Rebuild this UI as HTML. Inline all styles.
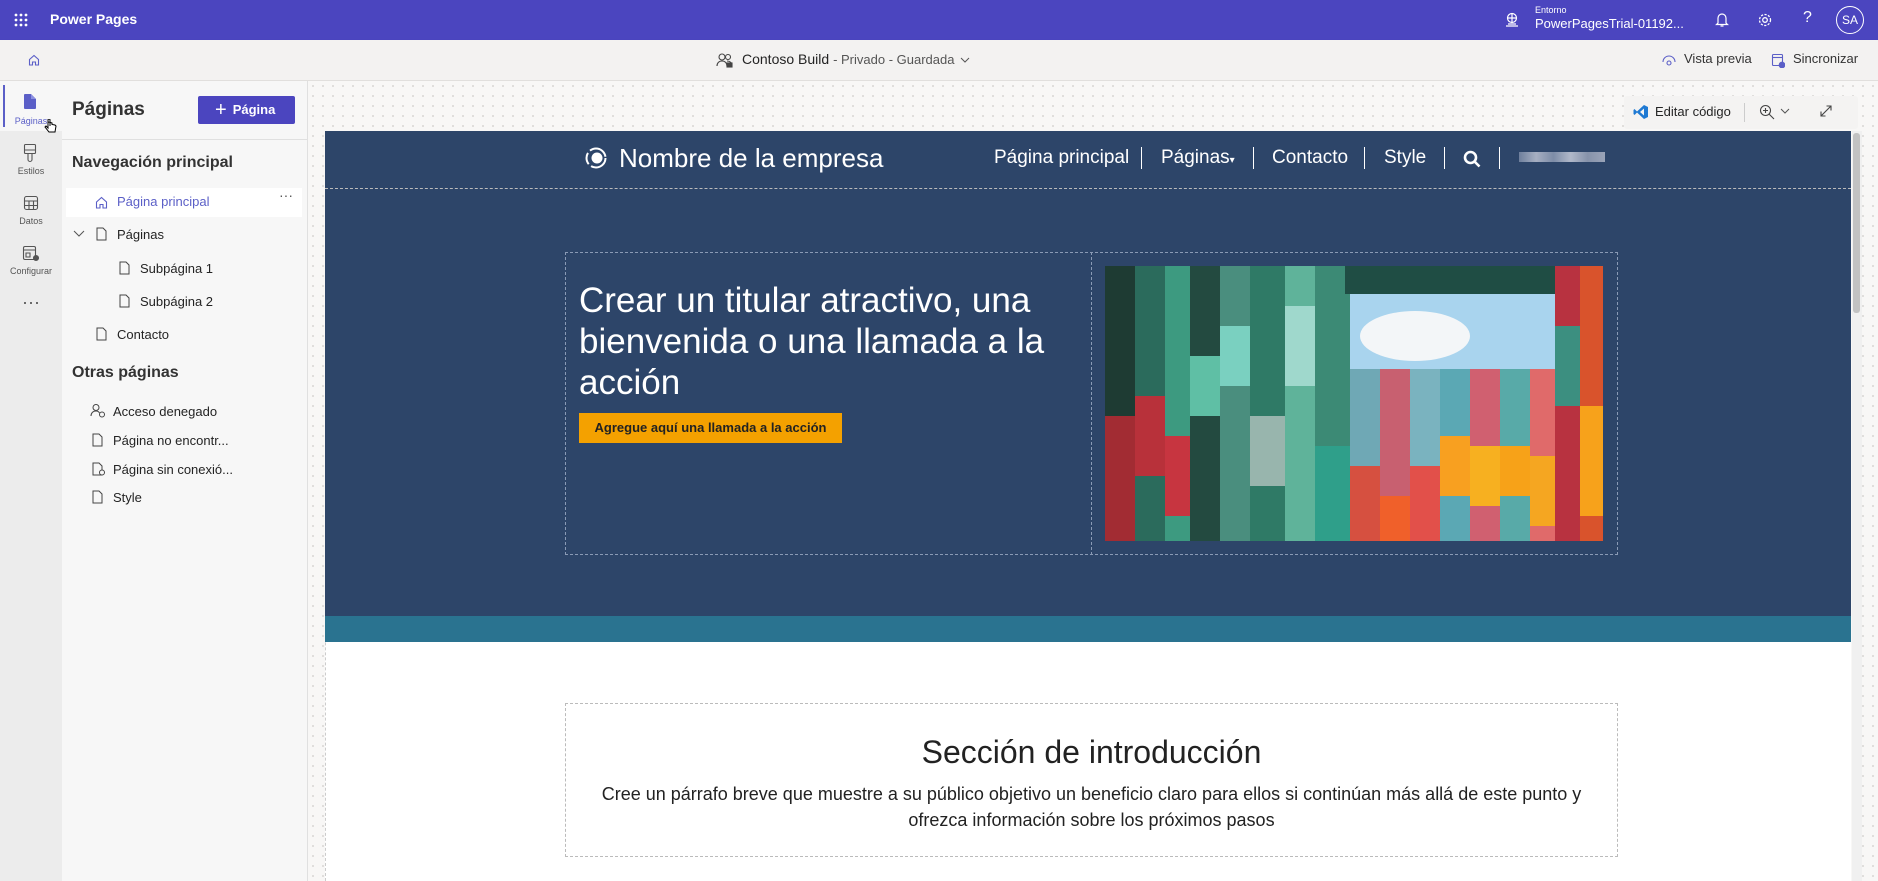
<!DOCTYPE html>
<html><head><meta charset="utf-8"><style>
*{box-sizing:border-box;margin:0;padding:0}
body{width:1878px;height:881px;overflow:hidden;font-family:"Segoe UI","Liberation Sans",sans-serif;background:#f8f7f6;position:relative;color:#242424}
.a{position:absolute}
.top{left:0;top:0;width:1878px;height:40px;background:#4b45bf;color:#fff}
.cmd{left:0;top:40px;width:1878px;height:41px;background:#f3f2f1;border-bottom:1px solid #e1dfdd;box-shadow:0 1px 2px rgba(0,0,0,.08)}
.rail{left:0;top:81px;width:62px;height:800px;background:#ececec}
.panel{left:62px;top:81px;width:246px;height:800px;background:#f7f7f7;border-right:1px solid #e0e0e0}
.canvas{left:308px;top:81px;width:1570px;height:800px;background-color:#f8f7f6;background-image:radial-gradient(#dedcda 1px,transparent 1.2px);background-size:10px 10px}
.rl{width:62px;text-align:center;font-size:9px;color:#555}
.it{font-size:13px;color:#242424;white-space:nowrap}
.nav{color:#fff;font-family:"Liberation Sans",sans-serif;font-size:19px;top:147px}
.sep{width:1px;height:22px;background:#fff;top:147px}
svg{display:block}
</style></head><body>
<div class="a top">
 <svg class="a" style="left:14px;top:13px" width="14" height="14"><g fill="#fff"><circle cx="2" cy="2" r="1.4"/><circle cx="7" cy="2" r="1.4"/><circle cx="12" cy="2" r="1.4"/><circle cx="2" cy="7" r="1.4"/><circle cx="7" cy="7" r="1.4"/><circle cx="12" cy="7" r="1.4"/><circle cx="2" cy="12" r="1.4"/><circle cx="7" cy="12" r="1.4"/><circle cx="12" cy="12" r="1.4"/></g></svg>
 <div class="a" style="left:50px;top:11px;font-size:14px;font-weight:600">Power Pages</div>
 <svg class="a" style="left:1504px;top:12px" width="16" height="16" fill="none" stroke="#fff" stroke-width="1.2"><circle cx="8" cy="6" r="4.5"/><path d="M3.5 6h9M8 1.5v9M2 14h12M4 12h8"/></svg>
 <div class="a" style="left:1535px;top:5px;font-size:9px">Entorno</div>
 <div class="a" style="left:1535px;top:16px;font-size:13px">PowerPagesTrial-01192...</div>
 <svg class="a" style="left:1715px;top:12px" width="14" height="16" fill="none" stroke="#fff" stroke-width="1.2"><path d="M3 11V6a4 4 0 0 1 8 0v5l1.5 1.5h-11z M5.5 14h3"/></svg>
 <svg class="a" style="left:1757px;top:12px" width="16" height="16" fill="none" stroke="#fff" stroke-width="1.3"><circle cx="8" cy="8" r="2.3"/><circle cx="8" cy="8" r="5.5" stroke-dasharray="2.2 1.4"/></svg>
 <div class="a" style="left:1803px;top:9px;font-size:16px">?</div>
 <div class="a" style="left:1836px;top:6px;width:28px;height:28px;border:1px solid #fff;border-radius:50%;font-size:12px;text-align:center;line-height:26px">SA</div>
</div>
<div class="a cmd">
 <svg class="a" style="left:28px;top:14px" width="12" height="12" fill="none" stroke="#5b5fc7" stroke-width="1.1"><path d="M1.5 5.5 6 1.5l4.5 4V11h-3V8h-3v3h-3z"/></svg>
 <svg class="a" style="left:716px;top:12px" width="18" height="16" fill="none" stroke="#444" stroke-width="1.1"><circle cx="6" cy="5" r="3"/><circle cx="12" cy="5" r="2.5"/><path d="M1 14c0-3 2-5 5-5s5 2 5 5M11 9c3 0 5 2 5 4"/><rect x="11" y="11" width="5" height="4" fill="#444"/></svg>
 <div class="a" style="left:742px;top:11px;font-size:14px;color:#242424">Contoso Build <span style="font-size:13px;color:#555">- Privado - Guardada</span></div>
 <svg class="a" style="left:960px;top:17px" width="10" height="7" fill="none" stroke="#555"><path d="M1 1l4 4 4-4"/></svg>
 <svg class="a" style="left:1662px;top:15px" width="14" height="12" fill="none" stroke="#5b5fc7" stroke-width="1.1"><path d="M1 7a6 6 0 0 1 12 0"/><circle cx="7" cy="8" r="2"/></svg>
 <div class="a" style="left:1684px;top:11px;font-size:13px;color:#333">Vista previa</div>
 <svg class="a" style="left:1771px;top:13px" width="14" height="15" fill="none" stroke="#5b5fc7" stroke-width="1.1"><rect x="1.5" y="1.5" width="10" height="11" rx="1"/><path d="M1.5 4.5h10"/><circle cx="11" cy="12" r="2.8" fill="#5b5fc7"/></svg>
 <div class="a" style="left:1793px;top:11px;font-size:13px;color:#333">Sincronizar</div>
</div>
<div class="a rail">
 <div class="a" style="left:0;top:0;width:62px;height:50px;background:#f7f7f7"></div>
 <div class="a" style="left:3px;top:4px;width:2px;height:42px;background:#5b5fc7"></div>
 <svg class="a" style="left:23px;top:12px" width="14" height="17"><path d="M1 2a1 1 0 0 1 1-1h6l5 5v9a1 1 0 0 1-1 1H2a1 1 0 0 1-1-1z" fill="#5b5fc7"/><path d="M8 1v5h5" fill="#8b8fe0"/></svg>
 <div class="a rl" style="top:35px;color:#5b5fc7">Páginas</div>
 <svg class="a" style="left:44px;top:38px" width="14" height="18"><path d="M4 1v8l-2 -2-1 1 4 5h6l1-6-1-1-3-.5V4L6.5 3.5 4 3z M4 1a1 1 0 0 1 2 0v6" fill="#fff" stroke="#000" stroke-width="1"/></svg>
 <svg class="a" style="left:23px;top:62px" width="14" height="20" fill="none" stroke="#555" stroke-width="1.1"><rect x="1.5" y="1.5" width="11" height="9" rx="1"/><path d="M1.5 7h11M5 10.5v6a2 2 0 0 0 4 0v-6"/></svg>
 <div class="a rl" style="top:85px">Estilos</div>
 <svg class="a" style="left:23px;top:114px" width="16" height="16" fill="none" stroke="#555" stroke-width="1.1"><rect x="1.5" y="1.5" width="13" height="13" rx="2"/><path d="M1.5 6h13M1.5 10.5h13M6 6v8.5M10.5 6v8.5"/></svg>
 <div class="a rl" style="top:135px">Datos</div>
 <svg class="a" style="left:22px;top:164px" width="18" height="17" fill="none" stroke="#555" stroke-width="1.1"><rect x="1.5" y="1.5" width="12" height="13" rx="1.5"/><path d="M1.5 5h12M4 8h4v4H4z"/><circle cx="14" cy="13" r="2.5" fill="#555"/></svg>
 <div class="a rl" style="top:185px">Configurar</div>
 <div class="a rl" style="top:211px;font-size:18px;color:#555">···</div>
</div>
<div class="a panel">
 <div class="a" style="left:10px;top:18px;font-size:19px;font-weight:600;color:#333">Páginas</div>
 <div class="a" style="left:136px;top:15px;width:97px;height:28px;background:#4b45bf;border-radius:2px;color:#fff;font-size:13px;font-weight:600;line-height:28px;padding-left:17px"><span style="font-size:20px;font-weight:300;vertical-align:-2px;margin-right:6px">+</span>Página</div>
 <div class="a" style="left:0;top:58px;width:245px;height:1px;background:#e0e0e0"></div>
 <div class="a" style="left:10px;top:73px;font-size:16px;font-weight:600;color:#333">Navegación principal</div>
 <div class="a" style="left:4px;top:107px;width:236px;height:29px;background:#fff"></div>
 <svg class="a" style="left:33px;top:115px" width="13" height="13" fill="none" stroke="#5b5fc7" stroke-width="1.1"><path d="M1.5 6 6.5 1.5l5 4.5V12h-3.5V8.5h-3V12H1.5z"/></svg>
 <div class="a it" style="left:55px;top:113px;color:#5b5fc7">Página principal</div>
 <div class="a" style="left:217px;top:106px;font-size:14px;color:#555">···</div>
 <svg class="a" style="left:11px;top:149px" width="12" height="8" fill="none" stroke="#555"><path d="M1 1l5 5 5-5"/></svg>
 <svg class="a" style="left:34px;top:146px" width="11" height="14" fill="none" stroke="#444"><path d="M1 1h6l3 3v9H1z"/></svg>
 <div class="a it" style="left:55px;top:146px">Páginas</div>
 <svg class="a" style="left:57px;top:180px" width="11" height="14" fill="none" stroke="#444"><path d="M1 1h6l3 3v9H1z"/></svg>
 <div class="a it" style="left:78px;top:180px">Subpágina 1</div>
 <svg class="a" style="left:57px;top:213px" width="11" height="14" fill="none" stroke="#444"><path d="M1 1h6l3 3v9H1z"/></svg>
 <div class="a it" style="left:78px;top:213px">Subpágina 2</div>
 <svg class="a" style="left:34px;top:246px" width="11" height="14" fill="none" stroke="#444"><path d="M1 1h6l3 3v9H1z"/></svg>
 <div class="a it" style="left:55px;top:246px">Contacto</div>
 <div class="a" style="left:10px;top:283px;font-size:16px;font-weight:600;color:#333">Otras páginas</div>
 <svg class="a" style="left:28px;top:322px" width="16" height="15" fill="none" stroke="#444"><circle cx="6" cy="4.5" r="3"/><path d="M1 13c0-3 2-5 5-5 2 0 3 1 3.5 2"/><circle cx="12" cy="11.5" r="2.5"/></svg>
 <div class="a it" style="left:51px;top:323px">Acceso denegado</div>
 <svg class="a" style="left:30px;top:352px" width="11" height="14" fill="none" stroke="#444"><path d="M1 1h6l3 3v9H1z"/></svg>
 <div class="a it" style="left:51px;top:352px">Página no encontr...</div>
 <svg class="a" style="left:30px;top:381px" width="14" height="14" fill="none" stroke="#444"><path d="M1 1h6l3 3v9H1z"/><circle cx="10" cy="10.5" r="2.5" fill="#f7f7f7"/></svg>
 <div class="a it" style="left:51px;top:381px">Página sin conexió...</div>
 <svg class="a" style="left:30px;top:409px" width="11" height="14" fill="none" stroke="#444"><path d="M1 1h6l3 3v9H1z"/></svg>
 <div class="a it" style="left:51px;top:409px">Style</div>
</div>
<div class="a canvas"></div>
<div class="a" style="left:1624px;top:96px;width:234px;height:33px;background:#f4f3f2;border-radius:3px"></div>
<svg class="a" style="left:1633px;top:104px" width="16" height="16"><path d="M11 1 15 3v10l-4 2-7-6.5L1.5 11 0.5 10V6l1-1L4 7.5z M11 4.5 7 8l4 3.5z" fill="#1f7ad3" fill-rule="evenodd"/></svg>
<div class="a" style="left:1655px;top:104px;font-size:13px;color:#242424">Editar código</div>
<div class="a" style="left:1744px;top:103px;width:1px;height:19px;background:#ccc"></div>
<svg class="a" style="left:1759px;top:104px" width="16" height="16" fill="none" stroke="#444" stroke-width="1.1"><circle cx="6.5" cy="6.5" r="5"/><path d="M10 10l5 5M4 6.5h5M6.5 4v5"/></svg>
<svg class="a" style="left:1780px;top:108px" width="10" height="7" fill="none" stroke="#555"><path d="M1 1l4 4 4-4"/></svg>
<svg class="a" style="left:1819px;top:104px" width="14" height="14" fill="none" stroke="#444" stroke-width="1.1"><path d="M2 12 12 2M7.5 2H12v4.5M2 7.5V12h4.5"/></svg>
<div class="a" style="left:325px;top:131px;width:1526px;height:750px;background:#fff;border-left:1px dashed #ccc"></div>
<div class="a" style="left:325px;top:131px;width:1526px;height:57px;background:#2d4569"></div>
<div class="a" style="left:325px;top:188px;width:1526px;height:428px;background:#2d4569;border-top:1px dashed #bbb"></div>
<div class="a" style="left:325px;top:616px;width:1526px;height:26px;background:#2a7390"></div>
<div class="a" style="left:1852px;top:131px;width:10px;height:750px;background:#f0f0f0"></div>
<div class="a" style="left:1853px;top:133px;width:7px;height:180px;background:#c2c2c2;border-radius:3px"></div>
<svg class="a" style="left:584px;top:146px" width="24" height="24"><circle cx="12" cy="12" r="9.5" fill="none" stroke="#fff" stroke-width="2" stroke-dasharray="20 3 12 3"/><circle cx="13" cy="12" r="5.5" fill="#fff"/></svg>
<div class="a" style="left:619px;top:143px;color:#fff;font-family:'Liberation Sans',sans-serif;font-size:26px">Nombre de la empresa</div>
<div class="a nav" style="left:994px">Página principal</div>
<div class="a sep" style="left:1141px"></div>
<div class="a nav" style="left:1161px">Páginas<span style="font-size:10px">▾</span></div>
<div class="a sep" style="left:1253px"></div>
<div class="a nav" style="left:1272px">Contacto</div>
<div class="a sep" style="left:1364px"></div>
<div class="a nav" style="left:1384px">Style</div>
<div class="a sep" style="left:1444px"></div>
<svg class="a" style="left:1463px;top:150px" width="18" height="18" fill="none" stroke="#fff" stroke-width="2.6"><circle cx="7.5" cy="7.5" r="5.5"/><path d="M11.5 11.5l5 5"/></svg>
<div class="a sep" style="left:1499px"></div>
<div class="a" style="left:1519px;top:152px;width:86px;height:10px;background:linear-gradient(90deg,#6e7f9c,#a6afc2 20%,#7d8ca7 40%,#b0b8c9 60%,#8692aa 80%,#9aa4b8)"></div>
<div class="a" style="left:565px;top:252px;width:1053px;height:303px;border:1px dashed #8a9ab5"></div>
<div class="a" style="left:1091px;top:252px;width:1px;height:303px;border-left:1px dashed #8a9ab5"></div>
<div class="a" style="left:579px;top:280px;color:#fff;font-family:'Liberation Sans',sans-serif;font-size:35px;line-height:41px;width:500px">Crear un titular atractivo, una bienvenida o una llamada a la acción</div>
<div class="a" style="left:579px;top:413px;width:263px;height:30px;background:#f4a100;color:#222;font-family:'Liberation Sans',sans-serif;font-size:13px;font-weight:bold;text-align:center;line-height:30px">Agregue aquí una llamada a la acción</div>
<svg class="a" style="left:1105px;top:266px" width="498" height="275" preserveAspectRatio="none" viewBox="0 0 498 275">
 <rect width="498" height="275" fill="#2a5a4c"/>
 <rect x="245" y="28" width="205" height="75" fill="#a9d4ee"/>
 <ellipse cx="310" cy="70" rx="55" ry="25" fill="#f3f6f8"/>
 <g>
  <rect x="0" y="0" width="30" height="275" fill="#1e3b33"/><rect x="0" y="150" width="30" height="125" fill="#a22c33"/>
  <rect x="30" y="0" width="30" height="275" fill="#2b6b5c"/><rect x="30" y="130" width="30" height="80" fill="#b8313a"/>
  <rect x="60" y="0" width="25" height="275" fill="#3d9a80"/><rect x="60" y="170" width="25" height="80" fill="#c73540"/>
  <rect x="85" y="0" width="30" height="275" fill="#234a40"/><rect x="85" y="90" width="30" height="60" fill="#5fbfa5"/>
  <rect x="115" y="0" width="30" height="275" fill="#4a8e7e"/><rect x="115" y="60" width="30" height="60" fill="#7ad0c0"/>
  <rect x="145" y="0" width="35" height="275" fill="#2f7a66"/><rect x="145" y="150" width="35" height="70" fill="#98b5ad"/>
  <rect x="180" y="0" width="30" height="275" fill="#5fb39a"/><rect x="180" y="40" width="30" height="80" fill="#9fd8cc"/>
  <rect x="210" y="0" width="35" height="275" fill="#3c8a75"/><rect x="210" y="180" width="35" height="95" fill="#2f9f8a"/>
  <rect x="245" y="103" width="30" height="172" fill="#6fa8b5"/><rect x="245" y="200" width="30" height="75" fill="#d65040"/>
  <rect x="275" y="103" width="30" height="172" fill="#c86070"/><rect x="275" y="230" width="30" height="45" fill="#f0602a"/>
  <rect x="305" y="103" width="30" height="172" fill="#7ab3bf"/><rect x="305" y="200" width="30" height="75" fill="#e2504a"/>
  <rect x="335" y="103" width="30" height="172" fill="#5ba8b4"/><rect x="335" y="170" width="30" height="60" fill="#f8a020"/>
  <rect x="365" y="103" width="30" height="172" fill="#d06070"/><rect x="365" y="180" width="30" height="60" fill="#f7b020"/>
  <rect x="395" y="103" width="30" height="172" fill="#58aaa8"/><rect x="395" y="180" width="30" height="50" fill="#f7a218"/>
  <rect x="425" y="103" width="25" height="172" fill="#e06a6a"/><rect x="425" y="190" width="25" height="70" fill="#f5a621"/>
  <rect x="450" y="0" width="25" height="275" fill="#b83240"/><rect x="450" y="60" width="25" height="80" fill="#3c8f80"/>
  <rect x="475" y="0" width="23" height="275" fill="#d9532c"/><rect x="475" y="140" width="23" height="110" fill="#f7a21b"/>
  <rect x="240" y="0" width="210" height="28" fill="#1f4d44"/>
 </g>
</svg>
<div class="a" style="left:565px;top:703px;width:1053px;height:154px;border:1px dashed #bbb"></div>
<div class="a" style="left:565px;top:734px;width:1053px;text-align:center;font-family:'Liberation Sans',sans-serif;font-size:32px;color:#222">Sección de introducción</div>
<div class="a" style="left:565px;top:781px;width:1053px;text-align:center;font-family:'Liberation Sans',sans-serif;font-size:18px;line-height:26px;color:#222">Cree un párrafo breve que muestre a su público objetivo un beneficio claro para ellos si continúan más allá de este punto y<br>ofrezca información sobre los próximos pasos</div>
</body></html>
